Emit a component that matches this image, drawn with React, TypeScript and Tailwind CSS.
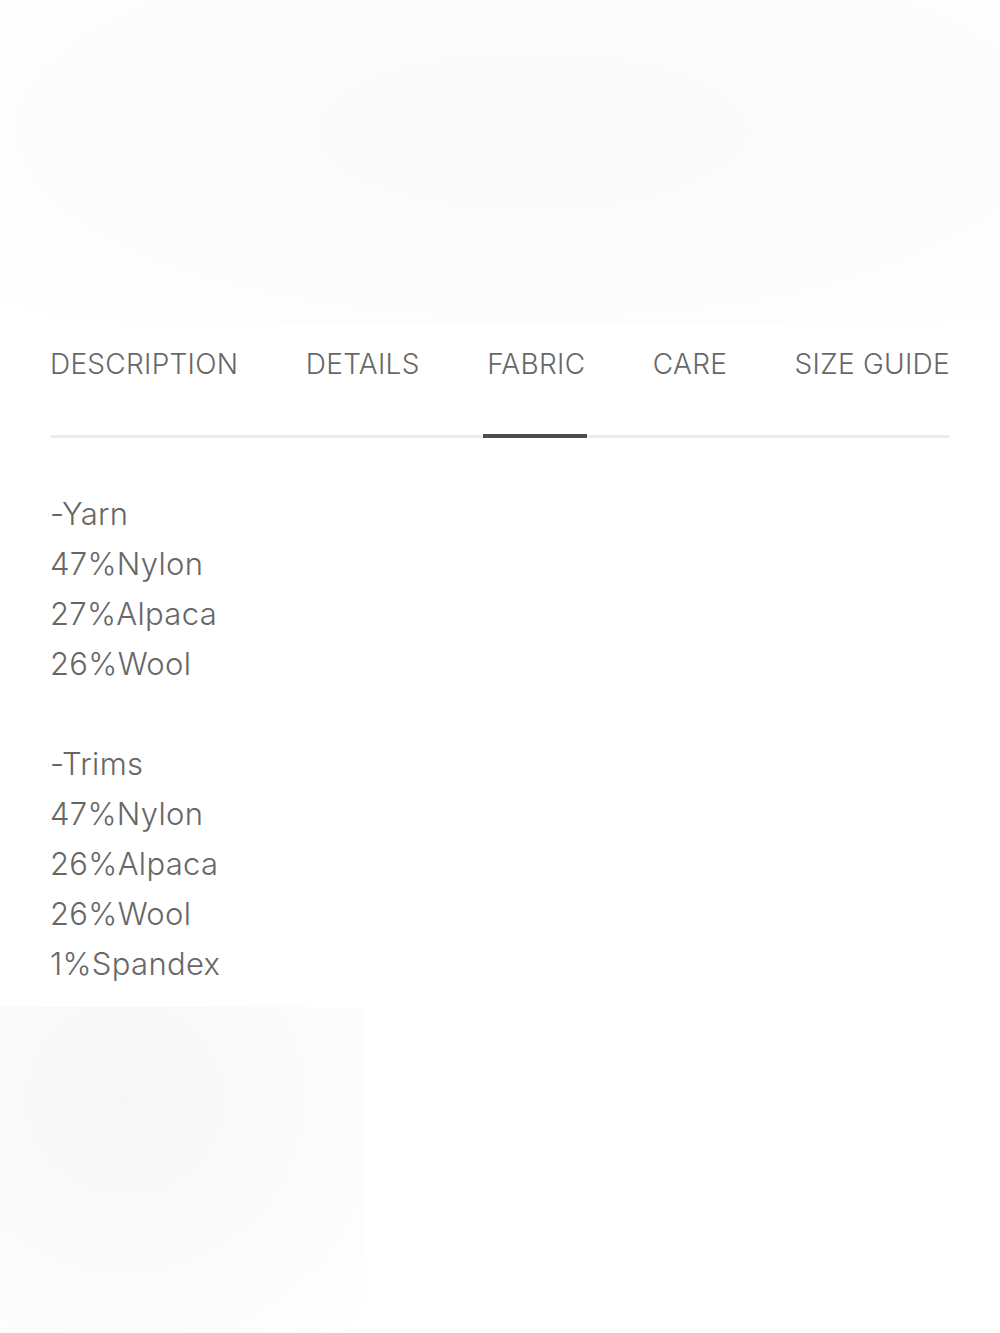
import { useState } from 'react';

const tabs = ['DESCRIPTION', 'DETAILS', 'FABRIC', 'CARE', 'SIZE GUIDE'];

const fabric = [
  '-Yarn',
  '47%Nylon',
  '27%Alpaca',
  '26%Wool',
  '',
  '-Trims',
  '47%Nylon',
  '26%Alpaca',
  '26%Wool',
  '1%Spandex',
];

const App = () => {
  const [active, setActive] = useState(2);

  return (
    <div className="min-h-screen bg-white font-['Inter','Liberation_Sans',sans-serif] text-[#666666]">
      {/* image placeholder above */}
      <div className="h-[325px] w-full bg-[radial-gradient(ellipse_at_53%_40%,#fafafa_0%,#fbfbfb_35%,#fcfcfc_60%,#fefefe_85%,#ffffff_100%)]" />

      {/* Tabs */}
      <div className="px-[50px]">
        <div className="flex justify-between pt-[22px]">
          {tabs.map((tab, i) => (
            <button key={tab} onClick={() => setActive(i)} className="flex flex-col items-stretch">
              <span className="text-[28px] leading-[34px] font-light tracking-[0.01em] text-[#676767] whitespace-nowrap">
                {tab}
              </span>
            </button>
          ))}
        </div>
        <div className="relative mt-[54px] h-[3px] bg-[#ececec]">
          <div className="absolute left-[433px] top-[-1px] h-[4px] w-[104px] bg-[#4d4d4b]" />
        </div>

        {/* Content */}
        <div className="pt-[51px] text-[31px] leading-[50px] font-light tracking-[0.01em] text-[#676767]">
          {fabric.map((line, i) => (
            <div key={i} className="h-[50px]">
              {line}
            </div>
          ))}
        </div>
      </div>

      {/* image placeholder below */}
      <div className="mt-[18px] h-[326px] w-[365px] bg-[radial-gradient(ellipse_at_34%_28%,#f7f7f7_0%,#f9f9f9_30%,#fbfbfb_55%,#fdfdfd_80%,#ffffff_100%)]" />
    </div>
  );
};

export default App;
